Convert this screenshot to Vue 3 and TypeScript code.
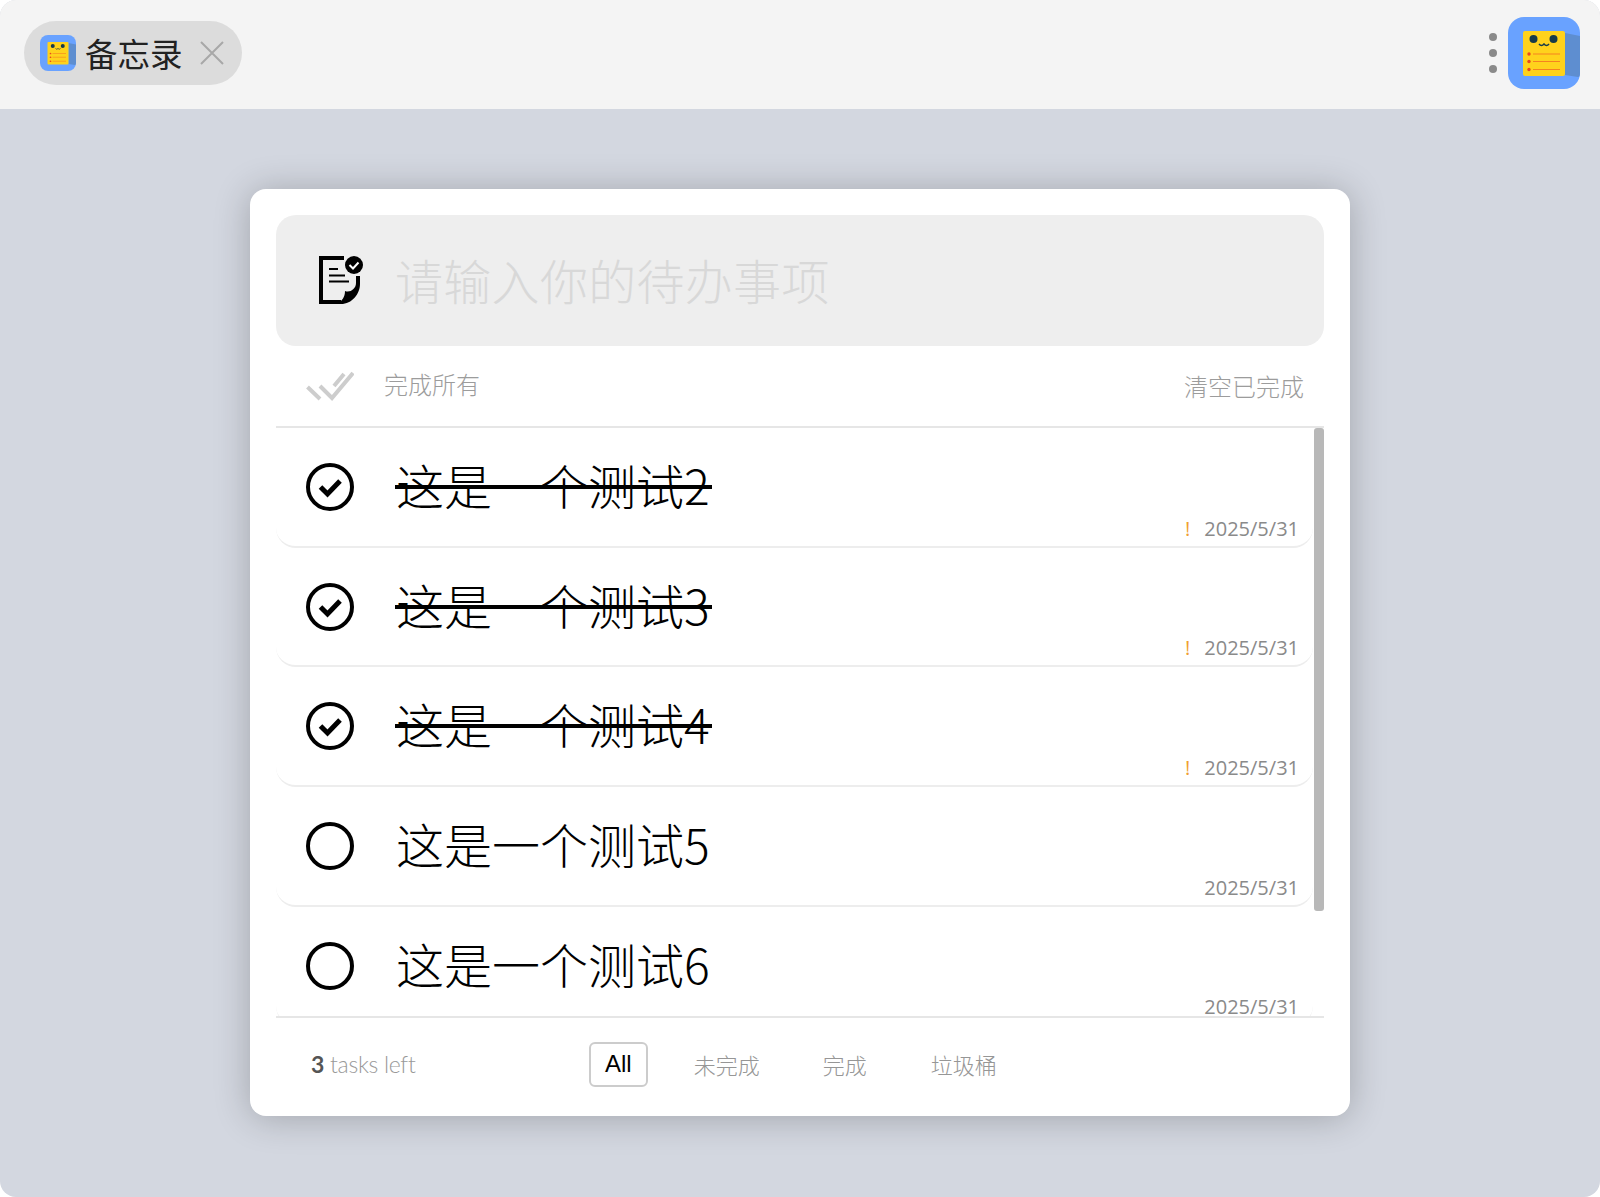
<script setup lang="ts">
interface Task { id: number; text: string; done: boolean }
const tasks: Task[] = [
  { id: 2, text: '这是一个测试2', done: true },
  { id: 3, text: '这是一个测试3', done: true },
  { id: 4, text: '这是一个测试4', done: true },
  { id: 5, text: '这是一个测试5', done: false },
  { id: 6, text: '这是一个测试6', done: false },
]
const filters = ['All', '未完成', '完成', '垃圾桶']
</script>

<template>
  <div class="page">
    <header class="topbar">
      <div class="tab">
        <svg class="tab-icon" viewBox="0 0 72 72">
          <rect width="72" height="72" rx="16" fill="#69a2ff" />
          <path d="M57 16 L72 19 V56 Q72 60 70 60 L57 58 Z" fill="#5e8ed0" />
          <rect x="15" y="14" width="42" height="45" rx="2" fill="#ffd21c" />
          <circle cx="25.5" cy="22" r="4" fill="#173a4a" />
          <circle cx="45.5" cy="22" r="4" fill="#173a4a" />
          <path d="M31 27 q2.5 3 5 0 q2.5 3 5 0" fill="none" stroke="#173a4a" stroke-width="1.5" />
          <g stroke="#f58220" stroke-width="1.2">
            <path d="M25 37 H52 M25 44.5 H52 M25 52.5 H52" />
          </g>
          <g fill="#e8491d">
            <circle cx="21" cy="37" r="1.7" /><circle cx="21" cy="44.5" r="1.7" /><circle cx="21" cy="52.5" r="1.7" />
          </g>
        </svg>
        <span class="tab-title">备忘录</span>
        <svg class="tab-close" viewBox="0 0 24 24">
          <path d="M1 1 L23 23 M23 1 L1 23" stroke="#a8a8a8" stroke-width="2" fill="none" />
        </svg>
      </div>
      <div class="bar-right">
        <div class="dots"><i></i><i></i><i></i></div>
        <svg class="app-icon" viewBox="0 0 72 72">
          <rect width="72" height="72" rx="16" fill="#69a2ff" />
          <path d="M57 16 L72 19 V56 Q72 60 70 60 L57 58 Z" fill="#5e8ed0" />
          <rect x="15" y="14" width="42" height="45" rx="2" fill="#ffd21c" />
          <circle cx="25.5" cy="22" r="4" fill="#173a4a" />
          <circle cx="45.5" cy="22" r="4" fill="#173a4a" />
          <path d="M31 27 q2.5 3 5 0 q2.5 3 5 0" fill="none" stroke="#173a4a" stroke-width="1.5" />
          <g stroke="#f58220" stroke-width="1.2">
            <path d="M25 37 H52 M25 44.5 H52 M25 52.5 H52" />
          </g>
          <g fill="#e8491d">
            <circle cx="21" cy="37" r="1.7" /><circle cx="21" cy="44.5" r="1.7" /><circle cx="21" cy="52.5" r="1.7" />
          </g>
        </svg>
      </div>
    </header>

    <main class="main">
      <section class="card">
        <div class="input-box">
          <svg class="input-icon" viewBox="0 0 44 48">
            <path d="M25 2 H2 V46 H22" fill="none" stroke="#000" stroke-width="4" />
            <path d="M10 13 H19 M10 19.5 H26 M10 25.5 H30" stroke="#000" stroke-width="2" fill="none" />
            <path d="M37 20 H41 V28 C41 38 33 48 22 48 H18 C23 45 26 41 26 35 C31 37 37 33 37 27 Z" fill="#000" />
            <circle cx="35" cy="9" r="9" fill="#000" />
            <path d="M30.5 9 L34 12.5 L39.5 6.5" stroke="#fff" stroke-width="2" fill="none" />
          </svg>
          <span class="placeholder">请输入你的待办事项</span>
        </div>

        <div class="toolbar">
          <div class="toolbar-left">
            <svg class="all-icon" viewBox="0 0 48 30">
              <path d="M1.5 16 L14 28 M14 15 L26 27 L47 2 M28 15 L38 3" stroke="#cdcdcd" stroke-width="4" fill="none" />
            </svg>
            <span class="complete-all">完成所有</span>
          </div>
          <span class="clear">清空已完成</span>
        </div>

        <div class="list-wrap">
          <ul class="list">
            <li v-for="t in tasks" :key="t.id" class="item">
              <svg class="check" viewBox="0 0 48 48">
                <circle cx="24" cy="24" r="22" fill="none" stroke="#000" stroke-width="4" />
                <path v-if="t.done" d="M14.5 24 L21.5 31 L34 18" fill="none" stroke="#000" stroke-width="5" />
              </svg>
              <span class="item-text" :class="{ done: t.done }">{{ t.text }}</span>
              <div class="meta">
                <span v-if="t.done" class="bang">!</span>
                <span class="date">2025/5/31</span>
              </div>
            </li>
          </ul>
          <div class="scroll-thumb"></div>
        </div>

        <footer class="footer">
          <div class="left-count"><b>3</b> tasks left</div>
          <nav class="filters">
            <span v-for="(f, i) in filters" :key="f" class="filter" :class="{ active: i === 0 }">{{ f }}</span>
          </nav>
        </footer>
      </section>
    </main>
  </div>
</template>

<style>
html, body { margin: 0; background: #fff; }
</style>

<style scoped>
.page {
  height: 1197px;
  display: flex;
  flex-direction: column;
  overflow: hidden;
  background: #d3d7e0;
  border-radius: 16px;
  font-family: "Noto Sans CJK SC", "Noto Sans", sans-serif;
}
.topbar {
  height: 109px;
  flex: none;
  background: #f4f4f4;
  display: flex;
  align-items: center;
  justify-content: space-between;
  box-sizing: border-box;
  padding: 0 20px 3px 24px;
}
.tab {
  width: 218px;
  height: 64px;
  box-sizing: border-box;
  background: #dcdcdc;
  border-radius: 32px;
  display: flex;
  align-items: center;
  padding-left: 16px;
}
.tab-icon { width: 36px; height: 36px; flex: none; }
.tab-title { margin-left: 9px; font-size: 32.5px; color: #222; line-height: 1; font-weight: 400; }
.tab-close { width: 24px; height: 24px; margin-left: 17px; flex: none; }
.bar-right { display: flex; align-items: center; gap: 11px; }
.dots { display: flex; flex-direction: column; gap: 8px; }
.dots i { width: 8px; height: 8px; border-radius: 50%; background: #8a8a8a; display: block; }
.app-icon { width: 72px; height: 72px; flex: none; }
.main { flex: 1; display: flex; justify-content: center; padding-top: 80px; }
.card {
  width: 1100px;
  height: 927px;
  box-sizing: border-box;
  background: #fff;
  border-radius: 16px;
  padding: 26px 26px 0;
  box-shadow: 0 2px 36px rgba(0, 0, 0, 0.24);
  display: flex;
  flex-direction: column;
}
.input-box {
  height: 131px;
  flex: none;
  background: #eee;
  border-radius: 20px;
  display: flex;
  align-items: center;
  padding-left: 43px;
}
.input-icon { width: 44px; height: 48px; flex: none; margin-bottom: 2px; }
.placeholder { margin: 0 0 3px 32px; font-size: 48px; letter-spacing: 0.3px; color: #d8d8d8; font-weight: 300; line-height: 1; }
.toolbar {
  height: 82px;
  flex: none;
  box-sizing: border-box;
  border-bottom: 2px solid #e6e6e6;
  display: flex;
  align-items: center;
  justify-content: space-between;
  padding: 0 20px 0 30px;
}
.toolbar-left { display: flex; align-items: center; }
.all-icon { width: 48px; height: 30px; }
.complete-all { margin: 0 0 6px 30px; font-size: 24px; color: #9c9c9c; font-weight: 300; }
.clear { font-size: 24px; color: #9c9c9c; font-weight: 300; margin-bottom: 2px; }
.list-wrap { height: 588px; flex: none; position: relative; overflow: hidden; border-bottom: 2px solid #e6e6e6; box-sizing: content-box; }
.list { margin: 0; padding: 0; list-style: none; width: 1037px; }
.item {
  height: 119.7px;
  box-sizing: border-box;
  position: relative;
  display: flex;
  align-items: center;
  padding: 1px 0 1px 30px;
  border-bottom: 2px solid #ededed;
  border-radius: 0 0 20px 20px;
}
.check { width: 48px; height: 48px; flex: none; }
.item-text { position: relative; margin: 0 0 4px 42px; padding-right: 2px; font-size: 48px; color: #000; font-weight: 300; line-height: 1.2; }
.item-text.done::after {
  content: "";
  position: absolute;
  left: -1px;
  right: 0;
  top: 29px;
  height: 4px;
  background: #000;
}
.meta {
  position: absolute;
  right: 14px;
  bottom: 3px;
  display: flex;
  align-items: center;
  line-height: 28px;
  font-family: "Open Sans", "Noto Sans", sans-serif;
  font-size: 20px;
  color: #8a8a8a;
}
.bang { color: #f0a030; margin-right: 14px; }
.scroll-thumb {
  position: absolute;
  top: 0;
  right: 0;
  width: 10px;
  height: 483px;
  background: #b8b8b8;
  border-radius: 3px;
}
.footer { flex: 1; display: flex; align-items: center; padding: 0 0 6px 35px; }
.left-count { width: 278px; flex: none; font-family: Lato, "Noto Sans", sans-serif; font-size: 23px; letter-spacing: -0.3px; font-weight: 300; color: #999; }
.left-count b { color: #555; font-weight: 700; }
.filters { display: flex; gap: 33px; }
.filter {
  height: 45px;
  box-sizing: border-box;
  border: 2px solid transparent;
  border-radius: 6px;
  padding: 0 12px;
  display: flex;
  align-items: center;
  font-size: 22px;
  color: #969696;
  font-weight: 300;
}
.filter:nth-child(2) { margin-left: -1px; margin-right: 2px; }
.filter:nth-child(4) { margin-left: 3px; }
.filter.active { border-color: #ccc; color: #000; font-family: "Liberation Sans", sans-serif; font-size: 24px; padding: 0 14px; }
</style>
